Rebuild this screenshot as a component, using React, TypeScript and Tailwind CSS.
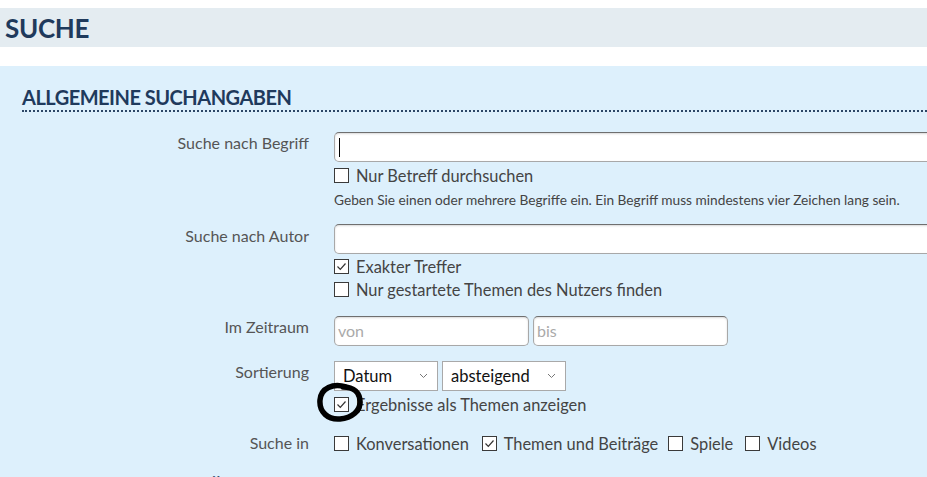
import React from "react";

const font = { fontFamily: "Lato, 'Noto Sans', sans-serif" };

function Box({ checked }: { checked?: boolean }) {
  return (
    <span className="inline-flex h-[15px] w-[15px] shrink-0 items-center justify-center border border-[#3a3a3a] bg-white">
      {checked && (
        <svg width="13" height="13" viewBox="0 0 13 13">
          <polyline points="2.5,6.5 5.3,9.3 10.5,3.5" fill="none" stroke="#333" strokeWidth="1.2" />
        </svg>
      )}
    </span>
  );
}

function Check({ checked, label }: { checked?: boolean; label: string }) {
  return (
    <span className="flex items-center gap-[7px] text-[16.4px] leading-[23px] text-[#444]">
      <Box checked={checked} />
      <span>{label}</span>
    </span>
  );
}

function Row({ label, children, labelPt = "pt-[1px]" }: { label: string; children: React.ReactNode; labelPt?: string }) {
  return (
    <div className="flex">
      <div className={`w-[309px] shrink-0 text-right text-[16px] leading-[22px] text-[#555] ${labelPt}`}>{label}</div>
      <div className="ml-[25px] flex-1">{children}</div>
    </div>
  );
}

function TextInput({ w, placeholder, caret }: { w?: string; placeholder?: string; caret?: boolean }) {
  return (
    <div
      className={`flex h-[30px] items-center rounded-[5px] border border-[#a8a8a8] border-t-[#6f6f6f] bg-white pl-[3px] text-[16px] text-[#aaa] shadow-[inset_0_1px_2px_rgba(0,0,0,0.15)] ${w ?? "w-[640px]"}`}
    >
      {caret && <span className="ml-[1px] h-[19px] w-[1px] bg-black" />}
      {placeholder}
    </div>
  );
}

function Select({ value, w }: { value: string; w: string }) {
  return (
    <div className={`flex h-[30px] items-center justify-between border border-[#a9a9a9] bg-white pl-[8px] pr-[9px] text-[16.5px] text-[#111] ${w}`}>
      <span>{value}</span>
      <svg width="9" height="6" viewBox="0 0 9 6">
        <polyline points="1,1 4.5,4.5 8,1" fill="none" stroke="#777" strokeWidth="1" />
      </svg>
    </div>
  );
}

export default function App() {
  return (
    <div className="h-[477px] w-[927px] overflow-hidden bg-white" style={font}>
      <div className="h-[8px]" />
      <div className="flex h-[39px] items-center bg-[#e4ecf1] pl-[5px]">
        <h1 className="mt-[2px] text-[26px] font-bold tracking-[-0.3px] text-[#1f3a5c]">SUCHE</h1>
      </div>
      <div className="h-[19px]" />
      <div className="relative h-[420px] bg-[#ddf0fc]">
        <div className="pl-[22px] pt-[19px]">
          <h2 className="border-b-2 border-dotted border-[#2c4766] pb-[1px] text-[20px] font-bold leading-[24px] tracking-[-0.5px] text-[#1f3a5c]">
            ALLGEMEINE SUCHANGABEN
          </h2>
        </div>

        <div className="mt-[20px]">
          <Row label="Suche nach Begriff" labelPt="pt-[0px]">
            <TextInput caret />
            <div className="mt-[2px]"><Check label="Nur Betreff durchsuchen" /></div>
            <div className="mt-[4px] text-[13.7px] leading-[18px] text-[#444]">
              Geben Sie einen oder mehrere Begriffe ein. Ein Begriff muss mindestens vier Zeichen lang sein.
            </div>
          </Row>
        </div>

        <div className="mt-[15px]">
          <Row label="Suche nach Autor" labelPt="pt-[1px]">
            <TextInput />
            <div className="mt-[1px]"><Check checked label="Exakter Treffer" /></div>
            <div><Check label="Nur gestartete Themen des Nutzers finden" /></div>
          </Row>
        </div>

        <div className="mt-[15px]">
          <Row label="Im Zeitraum" labelPt="pt-[0px]">
            <div className="flex gap-[4px]">
              <TextInput w="w-[195px]" placeholder="von" />
              <TextInput w="w-[195px]" placeholder="bis" />
            </div>
          </Row>
        </div>

        <div className="mt-[15px]">
          <Row label="Sortierung" labelPt="pt-[0px]">
            <div className="flex gap-[4px]">
              <Select value="Datum" w="w-[104px]" />
              <Select value="absteigend" w="w-[124px]" />
            </div>
            <div className="mt-[2px]"><Check checked label="Ergebnisse als Themen anzeigen" /></div>
          </Row>
        </div>

        <div className="mt-[16px]">
          <Row label="Suche in" labelPt="pt-[0px]">
            <div className="flex items-center">
              <Check label="Konversationen" />
              <span className="ml-[13px]"><Check checked label="Themen und Beiträge" /></span>
              <span className="ml-[10px]"><Check label="Spiele" /></span>
              <span className="ml-[12px]"><Check label="Videos" /></span>
            </div>
          </Row>
        </div>

        <div className="mt-[20px] pl-[22px]">
          <h2 className="text-[20px] font-bold leading-[24px] tracking-[-0.5px] text-[#1f3a5c]">THEMEN UND BEITRÄGE</h2>
        </div>

        <svg className="absolute left-[314px] top-[316px]" width="52" height="42" viewBox="0 0 52 42">
          <path
            d="M32 5 C19 1 7 6 6 18 C5 30 14 38 26 37 C38 36 46 29 46 20 C46 11 40 5 29 5"
            fill="none"
            stroke="#000"
            strokeWidth="5.5"
            strokeLinecap="round"
          />
          <path d="M44 13 C47 18 47 24 44 29" fill="none" stroke="#000" strokeWidth="4" strokeLinecap="round" />
        </svg>
      </div>
    </div>
  );
}
